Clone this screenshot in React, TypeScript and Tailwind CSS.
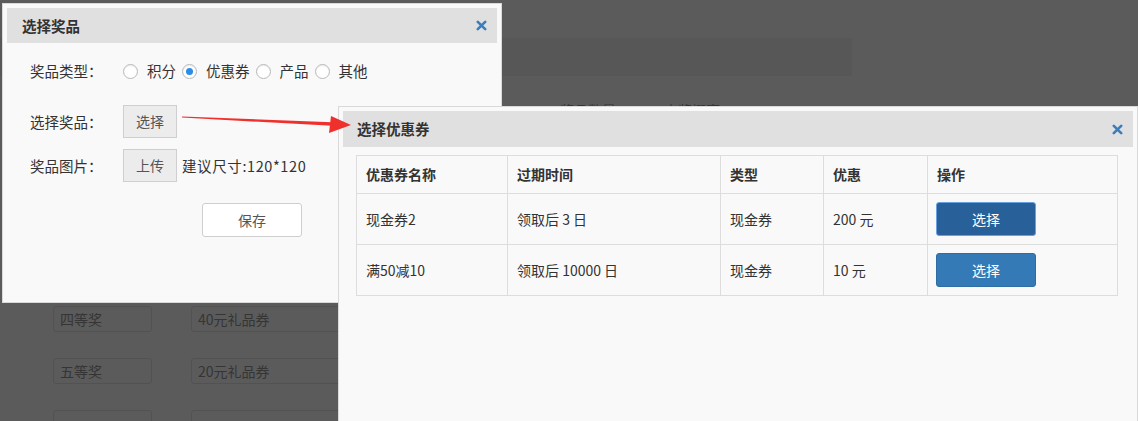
import React from 'react';

const font = { fontFamily: '"Noto Sans CJK SC", "Liberation Sans", sans-serif' };

const coupons = [
  { name: '现金券2', expire: '领取后 3 日', type: '现金券', value: '200 元', active: true },
  { name: '满50减10', expire: '领取后 10000 日', type: '现金券', value: '10 元', active: false },
];

const Radio: React.FC<{ label: string; checked?: boolean }> = ({ label, checked }) => (
  <label className="flex items-center">
    <span className="w-[15px] h-[15px] rounded-full border border-[#b8b8b8] bg-white flex items-center justify-center shadow-[inset_0_1px_1px_rgba(0,0,0,0.08)]">
      {checked && <span className="w-[7px] h-[7px] rounded-full bg-[#2b8de6]" />}
    </span>
    <span className="ml-[9px] mr-[6px] text-[14.5px]">{label}</span>
  </label>
);

const CloseX: React.FC = () => (
  <svg width="11" height="11" viewBox="0 0 11 11">
    <path d="M1.8 1.8 L9.2 9.2 M9.2 1.8 L1.8 9.2" stroke="#3b7dbd" strokeWidth="2.6" strokeLinecap="round" />
  </svg>
);

// dimmed page behind the dialogs
const Backdrop: React.FC = () => (
  <div className="flex flex-col text-[#353535] text-[14px]">
    <div className="h-[38px]" />
    <div className="h-[38px] w-[852px] bg-[#575757]" />
    <div className="h-[26px]" />
    <div className="flex h-[16px] items-center pl-[560px] gap-[48px] leading-none">
      <span>奖品数量</span>
      <span>中奖概率</span>
    </div>
    <div className="h-[188px]" />
    {[['四等奖', '40元礼品券'], ['五等奖', '20元礼品券'], ['', '']].map(([a, b], i) => (
      <div key={i} className="flex h-[26px] mb-[26px] pl-[53px] gap-[39px]">
        <div className="w-[99px] h-full border border-[#525252] rounded-[3px] flex items-center pl-[6px]">{a}</div>
        <div className="w-[160px] h-full border border-[#525252] rounded-[3px] flex items-center pl-[6px]">{b}</div>
      </div>
    ))}
  </div>
);

export default function App() {
  return (
    <div className="relative w-[1138px] h-[421px] overflow-hidden bg-[#5b5b5b]" style={font}>
      <Backdrop />

      {/* 选择奖品 */}
      <div className="absolute left-[2px] top-[3px] w-[500px] h-[300px] bg-[#f9f9f9] border border-[#d9d9d9] p-[4px] text-[14px] text-[#333]">
        <div className="h-[35px] bg-[#e0e0e0] flex items-center justify-between pl-[15px] pr-[10px]">
          <span className="font-bold text-[14.5px]">选择奖品</span>
          <CloseX />
        </div>
        <div className="pl-[23px] pt-[16px]">
          <div className="flex items-center h-[24px]">
            <span className="w-[93px] text-[14.5px]">奖品类型：</span>
            <div className="flex items-center">
              <Radio label="积分" />
              <Radio label="优惠券" checked />
              <Radio label="产品" />
              <Radio label="其他" />
            </div>
          </div>
          <div className="flex items-center mt-[22px] h-[33px]">
            <span className="w-[93px] text-[14.5px]">选择奖品：</span>
            <button className="w-[54px] h-[33px] bg-[#ececec] border border-[#cfcfcf] text-[#555]">选择</button>
          </div>
          <div className="flex items-center mt-[11px] h-[33px]">
            <span className="w-[93px] text-[14.5px]">奖品图片：</span>
            <button className="w-[54px] h-[33px] bg-[#ececec] border border-[#cfcfcf] text-[#555]">上传</button>
            <span className="ml-[5px] text-[14.5px] tracking-[0.6px]">建议尺寸:120*120</span>
          </div>
          <div className="flex mt-[21px] pl-[172px]">
            <button className="w-[100px] h-[34px] bg-white border border-[#cfcfcf] rounded-[3px] text-[#555]">保存</button>
          </div>
        </div>
      </div>

      {/* 选择优惠券 */}
      <div className="absolute left-[338px] top-[106px] w-[800px] h-[330px] bg-[#f9f9f9] border border-[#d9d9d9] p-[4px] text-[14px] text-[#333]">
        <div className="h-[36px] bg-[#e0e0e0] flex items-center justify-between pl-[14px] pr-[10px]">
          <span className="font-bold text-[14.5px]">选择优惠券</span>
          <CloseX />
        </div>
        <table className="mt-[8px] ml-[13px] w-[762px] border-collapse">
          <thead>
            <tr className="h-[38px] text-left">
              <th className="w-[151px] border border-[#ddd] pl-[9px] font-bold">优惠券名称</th>
              <th className="w-[213px] border border-[#ddd] pl-[9px] font-bold">过期时间</th>
              <th className="w-[103px] border border-[#ddd] pl-[9px] font-bold">类型</th>
              <th className="w-[104px] border border-[#ddd] pl-[9px] font-bold">优惠</th>
              <th className="border border-[#ddd] pl-[9px] font-bold">操作</th>
            </tr>
          </thead>
          <tbody>
            {coupons.map((c) => (
              <tr key={c.name} className="h-[51px]">
                <td className="border border-[#ddd] pl-[9px]">{c.name}</td>
                <td className="border border-[#ddd] pl-[9px]">{c.expire}</td>
                <td className="border border-[#ddd] pl-[9px]">{c.type}</td>
                <td className="border border-[#ddd] pl-[9px]">{c.value}</td>
                <td className="border border-[#ddd] pl-[8px]">
                  <button
                    className={
                      c.active
                        ? 'w-[100px] h-[34px] rounded-[3px] bg-[#28609a] border border-[#6aa0e0] text-white'
                        : 'w-[100px] h-[34px] rounded-[3px] bg-[#337ab7] border border-[#2e6da4] text-white'
                    }
                  >
                    选择
                  </button>
                </td>
              </tr>
            ))}
          </tbody>
        </table>
      </div>

      {/* red arrow */}
      <svg className="absolute left-[180px] top-[108px]" width="175" height="30" viewBox="0 0 175 30">
        <polygon points="2,8.4 152,14.2 152,17.8 2,9.6" fill="#f0302c" />
        <polygon points="151,8 171,17 149,25" fill="#f0302c" />
      </svg>
    </div>
  );
}
